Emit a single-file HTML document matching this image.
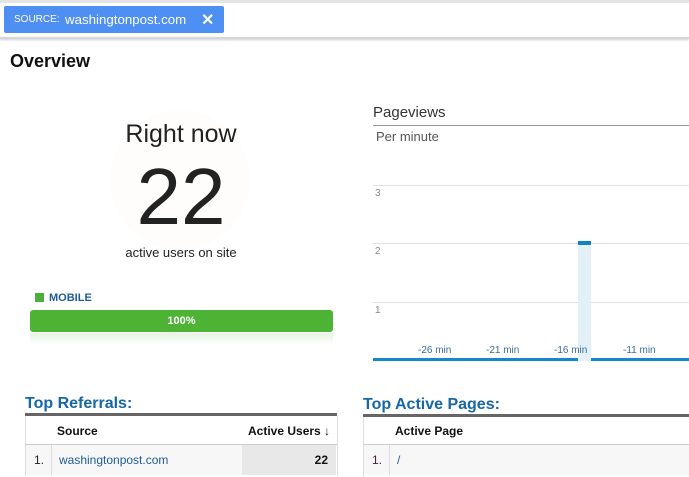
<!DOCTYPE html>
<html><head><style>
body{margin:0;width:689px;height:475px;overflow:hidden;background:#fff;font-family:"Liberation Sans",Arial,sans-serif;position:relative}
.a{position:absolute;white-space:nowrap}
</style></head><body>
<div class="a" style="left:0;top:0;width:689px;height:3px;background:#e4e4e4"></div>
<div class="a" style="left:0;top:37px;width:689px;height:2px;background:#d6d6d6;box-shadow:0 1px 2px #ccc"></div>
<div class="a" style="left:4px;top:6px;width:220px;height:27px;background:#4e8ff4;border-radius:2px"></div>
<div class="a" style="left:14px;top:14px;color:#fff;font-size:10px">SOURCE:</div>
<div class="a" style="left:65px;top:12px;color:#fff;font-size:13.3px">washingtonpost.com</div>
<div class="a" style="left:201px;top:10px;color:#fff;font-size:16px;font-weight:bold">✕</div>
<div class="a" style="left:10px;top:51px;font-size:18px;font-weight:bold;color:#111">Overview</div>

<div class="a" style="left:110px;top:110px;width:140px;height:140px;border-radius:50%;background:#fffdfc"></div>
<div class="a" style="left:81px;top:120px;width:200px;text-align:center;font-size:25px;color:#222">Right now</div>
<div class="a" style="left:81px;top:152px;width:200px;text-align:center;font-size:80px;color:#222;line-height:90px">22</div>
<div class="a" style="left:81px;top:245px;width:200px;text-align:center;font-size:13px;color:#222">active users on site</div>
<div class="a" style="left:35px;top:293px;width:9px;height:9px;background:#4caf3c"></div>
<div class="a" style="left:49px;top:292px;font-size:11px;font-weight:bold;color:#1f5c99">MOBILE</div>
<div class="a" style="left:30px;top:310px;width:303px;height:22px;background:#4db335;border-radius:3px;color:#fff;font-size:11px;font-weight:bold;text-align:center;line-height:22px">100%</div>
<div class="a" style="left:30px;top:333px;width:303px;height:12px;background:linear-gradient(#e6f4e1,#fff)"></div>

<div class="a" style="left:25px;top:395px;font-size:16px;font-weight:bold;color:#1766a8">Top Referrals:</div>
<div class="a" style="left:25px;top:413px;width:312px;height:3px;background:#666"></div>
<div class="a" style="left:25px;top:416px;width:311px;height:60px;border-left:1px solid #ddd;border-right:1px solid #ddd"></div>
<div class="a" style="left:57px;top:424px;font-size:12px;font-weight:bold;color:#111">Source</div>
<div class="a" style="left:248px;top:424px;font-size:12px;font-weight:bold;color:#111">Active Users ↓</div>
<div class="a" style="left:25px;top:444px;width:312px;height:1px;background:#ccc"></div>
<div class="a" style="left:26px;top:445px;width:310px;height:30px;background:#f7f7f7"></div>
<div class="a" style="left:51px;top:445px;width:1px;height:30px;background:#ddd"></div>
<div class="a" style="left:242px;top:445px;width:94px;height:30px;background:#e8e8e8"></div>
<div class="a" style="left:34px;top:453px;font-size:12px;color:#222">1.</div>
<div class="a" style="left:59px;top:453px;font-size:12px;color:#1f5c99">washingtonpost.com</div>
<div class="a" style="left:300px;top:453px;width:28px;text-align:right;font-size:12px;font-weight:bold;color:#111">22</div>

<div class="a" style="left:373px;top:104px;font-size:15px;color:#333">Pageviews</div>
<div class="a" style="left:373px;top:125px;width:316px;height:1px;background:#999"></div>
<div class="a" style="left:376px;top:129px;font-size:13px;color:#555">Per minute</div>
<div class="a" style="left:373px;top:185px;width:316px;height:1px;background:#e2e2e2"></div>
<div class="a" style="left:373px;top:243px;width:316px;height:1px;background:#e2e2e2"></div>
<div class="a" style="left:373px;top:302px;width:316px;height:1px;background:#e2e2e2"></div>
<div class="a" style="left:375px;top:188px;font-size:10px;color:#888">3</div>
<div class="a" style="left:375px;top:246px;font-size:10px;color:#888">2</div>
<div class="a" style="left:375px;top:305px;font-size:10px;color:#888">1</div>
<div class="a" style="left:578px;top:241px;width:13px;height:120px;background:#e3f0f8"></div>
<div class="a" style="left:578px;top:241px;width:13px;height:4px;background:#0d80c8"></div>
<div class="a" style="left:373px;top:358px;width:316px;height:3px;background:#1587cf"></div>
<div class="a" style="left:578px;top:358px;width:13px;height:3px;background:#e3f0f8"></div>
<div class="a" style="left:418px;top:345px;font-size:10px;color:#3b6c96">-26 min</div>
<div class="a" style="left:486px;top:345px;font-size:10px;color:#3b6c96">-21 min</div>
<div class="a" style="left:554px;top:345px;font-size:10px;color:#3b6c96">-16 min</div>
<div class="a" style="left:623px;top:345px;font-size:10px;color:#3b6c96">-11 min</div>

<div class="a" style="left:363px;top:396px;font-size:16px;font-weight:bold;color:#1766a8">Top Active Pages:</div>
<div class="a" style="left:363px;top:414px;width:326px;height:3px;background:#666"></div>
<div class="a" style="left:363px;top:417px;width:326px;height:60px;border-left:1px solid #ddd"></div>
<div class="a" style="left:395px;top:424px;font-size:12px;font-weight:bold;color:#111">Active Page</div>
<div class="a" style="left:363px;top:444px;width:326px;height:1px;background:#ccc"></div>
<div class="a" style="left:364px;top:445px;width:325px;height:30px;background:#f7f7f7"></div>
<div class="a" style="left:389px;top:445px;width:1px;height:30px;background:#ddd"></div>
<div class="a" style="left:372px;top:453px;font-size:12px;color:#4a1a3a">1.</div>
<div class="a" style="left:397px;top:453px;font-size:12px;color:#1f5c99">/</div>
</body></html>
